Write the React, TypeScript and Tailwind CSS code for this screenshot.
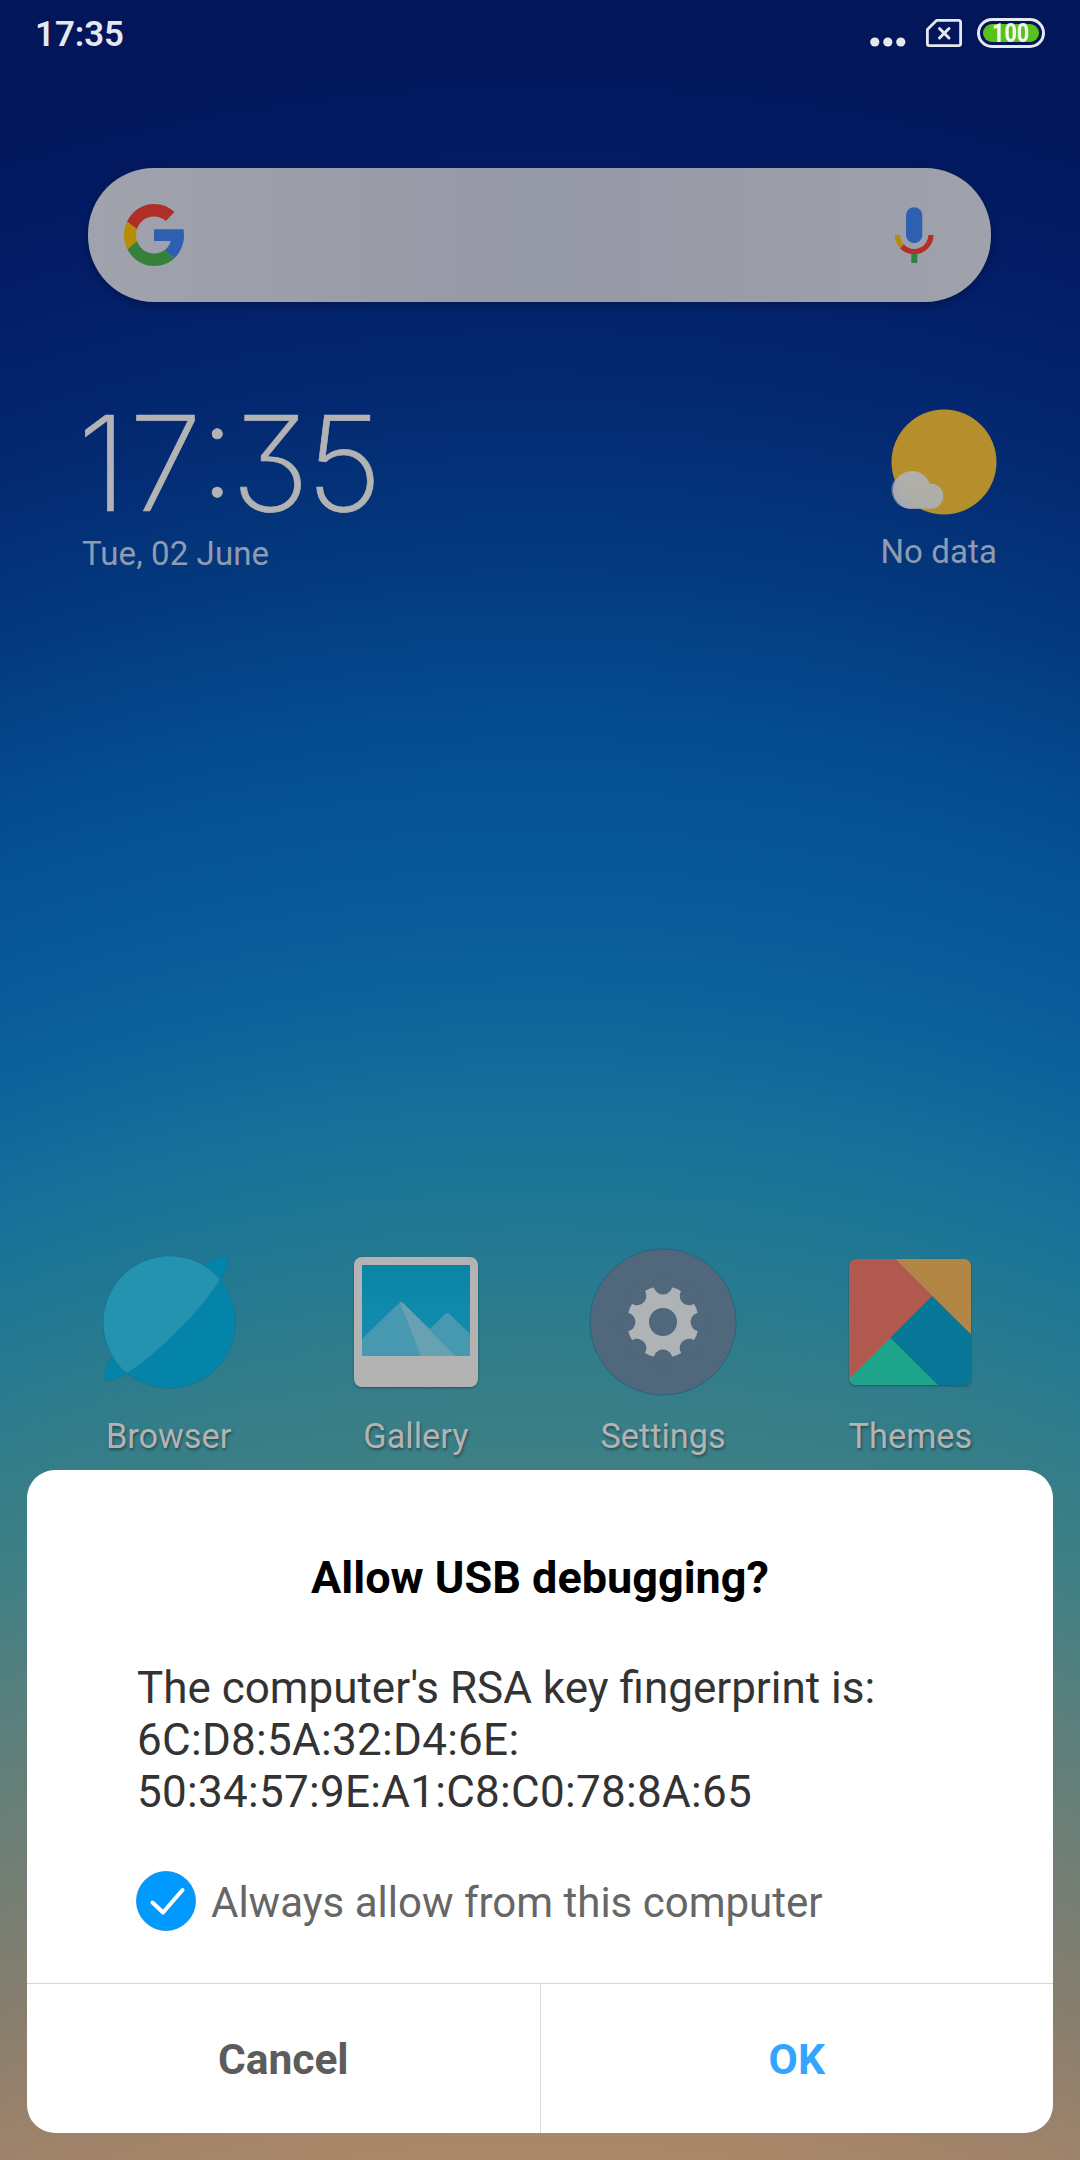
import React from "react";

function GoogleLogo() {
  return (
    <svg viewBox="0 0 48 48" className="h-[62px] w-[60px]" preserveAspectRatio="none">
      <path fill="#2f5fb0" d="M24 19.6v9.1h13.3c-.6 3-2.4 5.500-4.900 7.200l7.900 6.100C44.900 37.700 48 31.400 48 24.500c0-1.700-.2-3.300-.5-4.900z" />
      <path fill="#35803b" d="M2.700 35C6.700 42.700 14.700 48 24 48c6.500 0 12.100-2.100 16.300-6l-7.900-6.100c-2.200 1.500-5 2.400-8.400 2.400-6.400 0-11.700-4-13.600-9.600z" />
      <path fill="#b98c06" d="M10.400 28.700c-.5-1.500-.8-3.100-.8-4.700s.3-3.200.8-4.700L2.500 13.500C.9 16.600 0 20.200 0 24s.9 7.600 2.700 11z" />
      <path fill="#ae2f27" d="M24 9.700c3.700 0 6.900 1.200 9.500 3.500L40.300 6.200C36.100 2.300 30.500 0 24 0 14.600 0 6.500 5.400 2.500 13.500l7.900 5.800C12.300 13.700 17.600 9.700 24 9.700z" />
    </svg>
  );
}

function MicIcon() {
  return (
    <svg viewBox="0 0 40 58" className="h-[58px] w-10">
      <rect x="12" y="1.200" width="16.300" height="36" rx="8.150" fill="#2f5fb0" />
      <path d="M3.500 29a16.700 16.700 0 0 0 4.600 11.500" fill="none" stroke="#b98c06" strokeWidth="5.200" />
      <path d="M8 40.400A16.700 16.700 0 0 0 36.900 29" fill="none" stroke="#b23028" strokeWidth="5.200" />
      <path d="M17.300 48h6v9h-6z" fill="#2f8046" />
    </svg>
  );
}

function StatusBar() {
  return (
    <header className="flex h-[68px] items-center justify-between pl-[35px] pr-[35px] text-[#e6e8f0]">
      <span className="pt-px text-[34.800px] font-semibold leading-[67px]">17:35</span>
      <div className="flex items-center">
        <svg viewBox="0 0 36 10" className="mr-5 mt-4 h-[10px] w-9" fill="currentColor">
          <circle cx="4.800" cy="5" r="4.600" />
          <circle cx="17.800" cy="5" r="4.600" />
          <circle cx="30.800" cy="5" r="4.600" />
        </svg>
        <svg viewBox="0 0 36 28" className="-mt-[2px] mr-[15px] h-7 w-9" fill="none" stroke="currentColor" strokeWidth="2.800" strokeLinejoin="round" strokeLinecap="round">
          <path d="M10.500 1.400H33a1.600 1.600 0 0 1 1.600 1.600v22a1.600 1.600 0 0 1-1.600 1.600H3A1.600 1.600 0 0 1 1.400 25V10.500z" />
          <path d="M13.500 9.500l9.500 9.500M23 9.500L13.500 19" strokeWidth="3" />
        </svg>
        <div className="-mt-[2px] flex h-[30px] w-[68px] rounded-full border-[3px] border-[#e6e8f0] p-[3px]">
          <div className="flex flex-1 items-center justify-center rounded-full bg-[#58c21a] text-[25px] font-extrabold leading-[18px] text-[#f1f6ee]">
            <span className="mt-[2px] inline-block scale-x-[0.860]">100</span>
          </div>
        </div>
      </div>
    </header>
  );
}

function SearchBar() {
  return (
    <div className="ml-[88px] mr-[89px] mt-[100px] flex h-[134px] items-center justify-between rounded-[66px] bg-linear-to-r from-[#a0a3ac] via-[#9699a6] to-[#9fa2ab] pl-[35.500px] pr-[57px] shadow-[0_3px_8px_rgba(0,0,20,0.3)]">
      <GoogleLogo />
      <MicIcon />
    </div>
  );
}

function Clock() {
  return (
    <div className="-ml-[5px] w-[320px]">
      <div className="flex h-[132px] items-center pt-[2px] font-[Inter] text-[132px] font-extralight leading-[132px] text-[#b3b3b3] [-webkit-text-stroke:0.700px_#b3b3b3] [font-feature-settings:'cv09','case']">
        <span className="w-[52px]">1</span>
        <span className="w-[70px]">7</span>
        <span className="w-[32px]">:</span>
        <span className="w-[75px]">3</span>
        <span>5</span>
      </div>
    </div>
  );
}

function WeatherIcon() {
  return (
    <svg viewBox="0 0 106 106" className="h-[106px] w-[106px]">
      <defs>
        <linearGradient id="cloud" gradientUnits="userSpaceOnUse" x1="0" y1="61" x2="0" y2="99">
          <stop offset="0" stopColor="#afafad" />
          <stop offset="0.700" stopColor="#afaea6" />
          <stop offset="1" stopColor="#aaabaa" />
        </linearGradient>
      </defs>
      <circle cx="53" cy="53" r="52.500" fill="#b58f2b" />
      <g transform="translate(-0.400 0.600)">
        <path d="M19.300 99.200a18.900 18.900 0 1 1 19.800-25.200a12.600 12.600 0 1 1 2 25.200z" fill="url(#cloud)" />
        <path d="M4 70Q8 88 28 99.200h-8.700A18.900 18.900 0 0 1 4 70z" fill="#a3a9b9" fillOpacity="0.600" />
      </g>
    </svg>
  );
}

function BrowserIcon() {
  return (
    <svg viewBox="0 0 148 148" className="size-[148px]">
      <ellipse cx="71" cy="70.600" rx="86.100" ry="17.500" transform="rotate(-45 71 70.600)" fill="#0384a8" stroke="#206f87" strokeWidth="0.600" />
      <circle cx="74.200" cy="74" r="66.300" fill="#0384a8" stroke="#206f87" strokeWidth="0.600" />
      <path d="M31.700 125A66.300 66.300 0 1 1 125 31.300A86.100 17.500 -45 0 1 31.700 125z" fill="#2493b0" />
    </svg>
  );
}

function GalleryIcon() {
  return (
    <svg viewBox="0 0 148 148" className="size-[148px] drop-shadow-[0_1px_1px_rgba(0,0,0,0.3)]">
      <defs>
        <linearGradient id="sky" x1="0" y1="0" x2="0" y2="1">
          <stop offset="0" stopColor="#0885a6" />
          <stop offset="1" stopColor="#198db0" />
        </linearGradient>
      </defs>
      <rect x="12" y="9" width="124" height="130" rx="8" fill="#b3b3b3" />
      <path fill="url(#sky)" d="M20 17h108v91H20z" />
      <path fill="#4699b1" d="M20 91l37-36q2-1.500 4 0l27 26 15-15q2.500-2 4.500 0L128 86v22H20z" />
      <path fill="#68a2b2" d="M58 54.500q1.500-.500 3 .500l52 53H79z" />
    </svg>
  );
}

function SettingsIcon() {
  const notches = [0, 45, 90, 135, 180, 225, 270, 315];
  return (
    <svg viewBox="0 0 148 148" className="size-[148px]">
      <circle cx="74" cy="74" r="73" fill="#50677c" stroke="#226680" strokeWidth="1" />
      <circle cx="74" cy="74" r="36" fill="#aeb3b5" />
      {notches.map((a) => (
        <g key={a} transform={`rotate(${a} 74 74)`}>
          <path d="M64.500 38h19l-1.500 4a9.500 9.500 0 0 1-16 0z" fill="#50677c" />
          <circle cx="74" cy="36" r="9.500" fill="#50677c" />
        </g>
      ))}
      <circle cx="74" cy="74" r="14" fill="#50677c" />
    </svg>
  );
}

function ThemesIcon() {
  return (
    <svg viewBox="0 0 148 148" className="size-[148px] drop-shadow-[0_1px_1px_rgba(0,0,0,0.3)]">
      <clipPath id="tile">
        <rect x="13" y="11" width="122" height="126" rx="7" />
      </clipPath>
      <g clipPath="url(#tile)">
        <path fill="#b1594f" d="M0 0h148v148H0z" />
        <path fill="#b28644" d="M59.500 11H135v75.500z" />
        <path fill="#087697" d="M96 48l39 38.500V137H101L54 90z" />
        <path fill="#1da48a" d="M13 131l41.500-41L102 137H13z" />
      </g>
    </svg>
  );
}

const apps = [
  { name: "Browser", icon: <BrowserIcon /> },
  { name: "Gallery", icon: <GalleryIcon /> },
  { name: "Settings", icon: <SettingsIcon /> },
  { name: "Themes", icon: <ThemesIcon /> },
];

function Dialog() {
  return (
    <section className="mx-[27px] mt-[14px] flex h-[663px] flex-col overflow-hidden rounded-[28px] bg-white">
      <h1 className="mt-[80px] text-center text-[45px] font-bold leading-[56px] text-black">Allow USB debugging?</h1>
      <p className="ml-[110px] mt-14 text-[44px] leading-[52px] text-[#333333]">
        The computer's RSA key fingerprint is:
        <br />
        <span className="tracking-[0.290px]">
          6C:D8:5A:32:D4:6E:
          <br />
          50:34:57:9E:A1:C8:C0:78:8A:65
        </span>
      </p>
      <label className="ml-[109px] mt-[53px] flex h-[60px] items-center text-[42px] text-[#666666]">
        <svg viewBox="0 0 60 60" className="mr-[15px] size-[60px]">
          <circle cx="30" cy="30" r="29.500" fill="#0099ff" stroke="#1588d6" strokeWidth="0.800" />
          <path d="M16.500 31.500l10.500 10 19.500-22.500" fill="none" stroke="white" strokeWidth="4" strokeLinecap="round" strokeLinejoin="round" />
        </svg>
        <span className="mt-[2px]">Always allow from this computer</span>
      </label>
      <div className="mt-auto flex h-[150px] border-t border-[#d5d5d5] text-[42.500px] font-bold">
        <button className="flex-1 border-r border-[#dcdcdc] pt-[3px] text-[#5c5c5c]">Cancel</button>
        <button className="flex-1 pt-[3px] text-[#33a5ff]">OK</button>
      </div>
    </section>
  );
}

export default function App() {
  return (
    <main className="flex h-[2160px] w-[1080px] flex-col overflow-hidden bg-[radial-gradient(ellipse_3350px_6160px_at_50%_6160px,#ac8868_64.9%,#a0836a_66.7%,#877e6e_69.2%,#707f75_71.6%,#587f7d_74%,#3f8085_76.1%,#337d89_77.8%,#2a7b8e_78.9%,#1f7795_80.5%,#156f9a_82.1%,#0d639b_83.8%,#085a99_85.4%,#065396_87%,#044a8e_88.6%,#043a7f_90.9%,#032a72_93.5%,#031c66_96.8%,#021659_100%)] font-[Roboto,sans-serif]">
      <StatusBar />
      <SearchBar />
      <div className="mt-[107px] flex h-[175px] items-start justify-between pl-[82px] pr-[83px] text-[33px] text-[#8f9bb0]">
        <div className="-mt-[13px]">
          <Clock />
          <p className="mt-[6px] leading-[40px] tracking-[0.100px]">Tue, 02 June</p>
        </div>
        <div className="flex flex-col items-end">
          <WeatherIcon />
          <p className="mt-[17px] leading-[40px] tracking-[0.100px]">No data</p>
        </div>
      </div>
      <nav className="mt-[664px] grid grid-cols-4 pl-[45px] pr-[46px]">
        {apps.map((app) => (
          <div key={app.name} className="flex flex-col items-center">
            {app.icon}
            <span className="mt-[20px] text-[34.300px] leading-[40px] text-[#b3b3b3] [text-shadow:1px_2px_3px_rgba(0,0,0,0.4)]">{app.name}</span>
          </div>
        ))}
      </nav>
      <Dialog />
    </main>
  );
}
